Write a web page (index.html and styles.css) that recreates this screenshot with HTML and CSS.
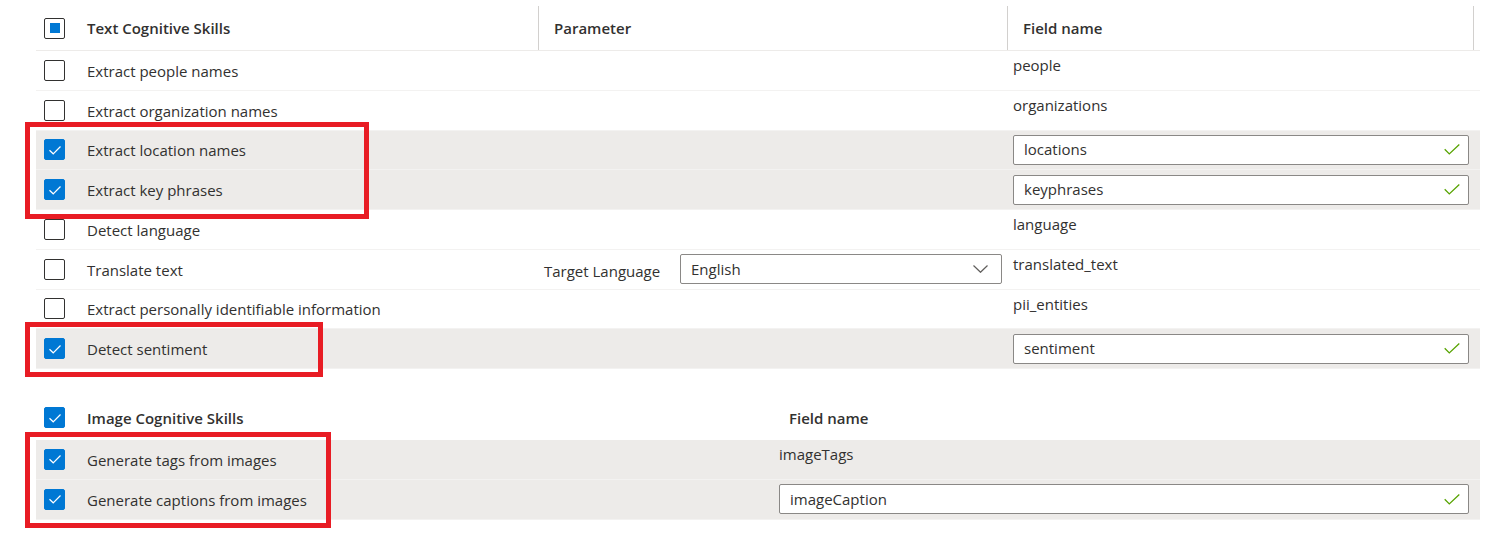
FILE: index.html
```html
<!DOCTYPE html>
<html lang="en">
<head>
<meta charset="utf-8">
<title>Cognitive Skills</title>
<link rel="stylesheet" href="styles.css">
</head>
<body>
<div class="page">
  <div class="table text-table">
    <div class="row head">
      <div class="cb"><span class="checkbox partial"></span></div>
      <div class="hlabel">Text Cognitive Skills</div>
      <div class="hcol">Parameter</div>
      <div class="hcol last">Field name</div>
    </div>
    <div class="row">
      <div class="cb"><span class="checkbox"></span></div>
      <div class="label">Extract people names</div>
      <div class="param"></div>
      <div class="field">people</div>
    </div>
    <div class="row">
      <div class="cb"><span class="checkbox"></span></div>
      <div class="label">Extract organization names</div>
      <div class="param"></div>
      <div class="field">organizations</div>
    </div>
    <div class="row selected">
      <div class="cb"><span class="checkbox checked"><svg viewBox="0 0 20 20"><path d="M4.5 10.2 L8.2 13.8 L15.5 6.5"/></svg></span></div>
      <div class="label">Extract location names</div>
      <div class="param"></div>
      <div class="field has-input"><div class="input"><span>locations</span><svg class="ok" viewBox="0 0 16 11"><path d="M0.7 5.3 L5.3 9.9 L15.3 0.6"/></svg></div></div>
    </div>
    <div class="row selected">
      <div class="cb"><span class="checkbox checked"><svg viewBox="0 0 20 20"><path d="M4.5 10.2 L8.2 13.8 L15.5 6.5"/></svg></span></div>
      <div class="label">Extract key phrases</div>
      <div class="param"></div>
      <div class="field has-input"><div class="input"><span>keyphrases</span><svg class="ok" viewBox="0 0 16 11"><path d="M0.7 5.3 L5.3 9.9 L15.3 0.6"/></svg></div></div>
    </div>
    <div class="row">
      <div class="cb"><span class="checkbox"></span></div>
      <div class="label">Detect language</div>
      <div class="param"></div>
      <div class="field">language</div>
    </div>
    <div class="row">
      <div class="cb"><span class="checkbox"></span></div>
      <div class="label">Translate text</div>
      <div class="param translate">
        <span class="plabel">Target Language</span>
        <div class="dropdown"><span>English</span><svg class="chev" viewBox="0 0 15 8"><path d="M0.5 0.5 L7.5 7.3 L14.5 0.5"/></svg></div>
      </div>
      <div class="field">translated_text</div>
    </div>
    <div class="row">
      <div class="cb"><span class="checkbox"></span></div>
      <div class="label">Extract personally identifiable information</div>
      <div class="param"></div>
      <div class="field">pii_entities</div>
    </div>
    <div class="row selected">
      <div class="cb"><span class="checkbox checked"><svg viewBox="0 0 20 20"><path d="M4.5 10.2 L8.2 13.8 L15.5 6.5"/></svg></span></div>
      <div class="label">Detect sentiment</div>
      <div class="param"></div>
      <div class="field has-input"><div class="input"><span>sentiment</span><svg class="ok" viewBox="0 0 16 11"><path d="M0.7 5.3 L5.3 9.9 L15.3 0.6"/></svg></div></div>
    </div>
  </div>

  <div class="table image-table">
    <div class="row ihead">
      <div class="cb"><span class="checkbox checked"><svg viewBox="0 0 20 20"><path d="M4.5 10.2 L8.2 13.8 L15.5 6.5"/></svg></span></div>
      <div class="hlabel">Image Cognitive Skills</div>
      <div class="ihcol">Field name</div>
    </div>
    <div class="row selected">
      <div class="cb"><span class="checkbox checked"><svg viewBox="0 0 20 20"><path d="M4.5 10.2 L8.2 13.8 L15.5 6.5"/></svg></span></div>
      <div class="label">Generate tags from images</div>
      <div class="field">imageTags</div>
    </div>
    <div class="row selected">
      <div class="cb"><span class="checkbox checked"><svg viewBox="0 0 20 20"><path d="M4.5 10.2 L8.2 13.8 L15.5 6.5"/></svg></span></div>
      <div class="label">Generate captions from images</div>
      <div class="field has-input"><div class="input"><span>imageCaption</span><svg class="ok" viewBox="0 0 16 11"><path d="M0.7 5.3 L5.3 9.9 L15.3 0.6"/></svg></div></div>
    </div>
  </div>

  <div class="callout c1"></div>
  <div class="callout c2"></div>
  <div class="callout c3"></div>
</div>
</body>
</html>
```

FILE: styles.css
```css
* { box-sizing: border-box; }

html, body {
  margin: 0;
  padding: 0;
  background: #ffffff;
}

body {
  font-family: "Open Sans", "Noto Sans", "Liberation Sans", sans-serif;
  font-size: 15px;
  color: #323130;
  width: 1504px;
  height: 540px;
  overflow: hidden;
}

.page {
  position: relative;
  padding-left: 36px;
  width: 1504px;
  height: 540px;
}

.table {
  width: 1444px;
}

.row {
  display: grid;
  height: 39.75px;
  border-bottom: 1px solid #f3f2f1;
}

.text-table .row {
  grid-template-columns: 51px 451px 469px 473px;
}

.image-table .row {
  grid-template-columns: 51px 686px 707px;
}

.row.selected {
  background: #edebe9;
}

.row.head {
  height: 51px;
  padding-top: 6px;
  border-bottom: 1px solid #edebe9;
}

.cb {
  display: flex;
  align-items: center;
  padding-left: 8px;
}

.checkbox {
  width: 21px;
  height: 21px;
  border: 1px solid #323130;
  border-radius: 2px;
  background: #ffffff;
  display: flex;
  align-items: center;
  justify-content: center;
}

.checkbox.partial::after {
  content: "";
  width: 10px;
  height: 10px;
  background: #0078d4;
}

.checkbox.checked {
  background: #0078d4;
  border-color: #0078d4;
}

.checkbox svg {
  width: 20px;
  height: 20px;
  flex: none;
}

.checkbox svg path {
  fill: none;
  stroke: #ffffff;
  stroke-width: 1.2;
}

.hlabel {
  display: flex;
  align-items: center;
  font-weight: 600;
}

.label {
  display: flex;
  align-items: center;
  padding-top: 1px;
}

.hcol {
  display: flex;
  align-items: center;
  padding-left: 15px;
  border-left: 1px solid #d2d0ce;
  font-weight: 600;
}

.hcol.last {
  border-right: 1px solid #d2d0ce;
  margin-right: 6px;
}

.field {
  padding: 4px 0 0 6px;
  line-height: 21px;
}

.field.has-input {
  display: flex;
  align-items: center;
  padding: 0 11px 0 6px;
}

.input, .dropdown {
  height: 30px;
  border: 1px solid #8a8886;
  border-radius: 2px;
  background: #ffffff;
  display: flex;
  align-items: center;
  justify-content: space-between;
  padding: 0 8px 0 10px;
}

.input {
  width: 100%;
}

.ok {
  width: 16px;
  height: 11px;
}

.ok path {
  fill: none;
  stroke: #57a300;
  stroke-width: 1.3;
}

.param.translate {
  display: flex;
  align-items: center;
  padding: 0 5px 0 6px;
}

.plabel {
  padding-top: 3px;
}

.dropdown {
  width: 322px;
  margin-left: auto;
  padding: 0 13px 0 10px;
}

.chev {
  width: 15px;
  height: 8px;
}

.chev path {
  fill: none;
  stroke: #605e5c;
  stroke-width: 1.2;
}

.image-table {
  margin-top: 29px;
}

.row.ihead {
  border-bottom: 1px solid transparent;
  height: 42px;
  padding-bottom: 2px;
}

.ihcol {
  display: flex;
  align-items: center;
  padding-left: 16px;
  font-weight: 600;
}

.callout {
  position: absolute;
  border: 5px solid #e81c24;
}

.c1 { left: 25px; top: 122px; width: 344px; height: 97px; }
.c2 { left: 25px; top: 322px; width: 298px; height: 55px; }
.c3 { left: 25px; top: 432px; width: 306px; height: 96px; }
```
